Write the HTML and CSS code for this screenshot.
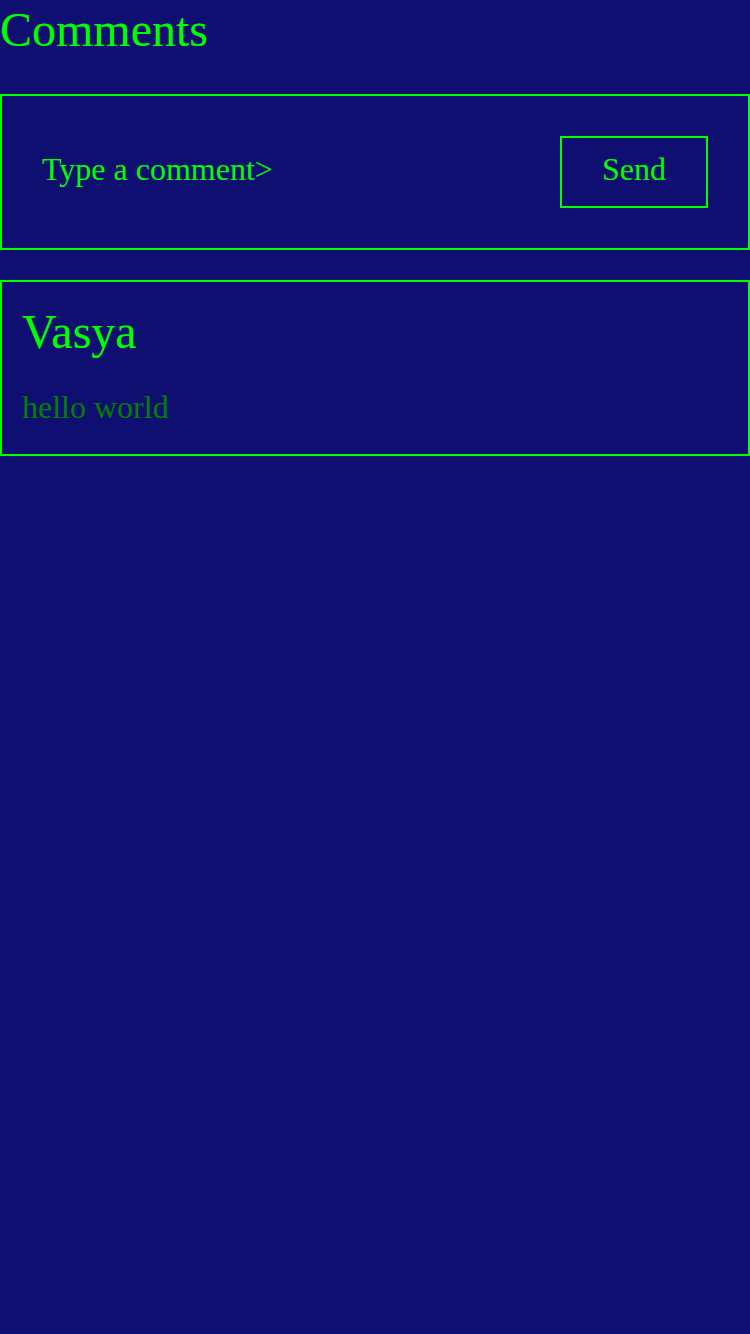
FILE: index.html
```html
<!DOCTYPE html>
<html>
<head>
<meta charset="utf-8">
<link rel="stylesheet" href="styles.css">
</head>
<body>
<h1 class="title">Comments</h1>
<div class="composer">
  <div class="placeholder">Type a comment&gt;</div>
  <div class="send">Send</div>
</div>
<div class="comment">
  <div class="author">Vasya</div>
  <div class="text">hello world</div>
</div>
</body>
</html>
```
FILE: styles.css
```css
html, body {
  margin: 0;
  padding: 0;
  background: #0e0f70;
  font-family: "Liberation Serif", "Times New Roman", serif;
  color: #00ff00;
  min-height: 1334px;
}
.title {
  margin: 0 0 35px 0;
  font-size: 48px;
  font-weight: normal;
  line-height: 59px;
}
.composer {
  border: 2px solid #00ff00;
  padding: 40px;
  display: flex;
  align-items: center;
  justify-content: space-between;
}
.placeholder {
  font-size: 32px;
  margin-bottom: 6px;
}
.send {
  font-size: 32px;
  border: 2px solid #00ff00;
  padding: 0 34px 6px;
  height: 62px;
  display: flex;
  align-items: center;
  justify-content: center;
  box-sizing: content-box;
  width: 76px;
}
.comment {
  margin-top: 30px;
  border: 2px solid #00ff00;
  padding: 22px 20px 28px;
}
.author {
  font-size: 48px;
  line-height: 55px;
}
.text {
  margin-top: 30px;
  font-size: 32px;
  line-height: 37px;
  color: #008000;
}
```
